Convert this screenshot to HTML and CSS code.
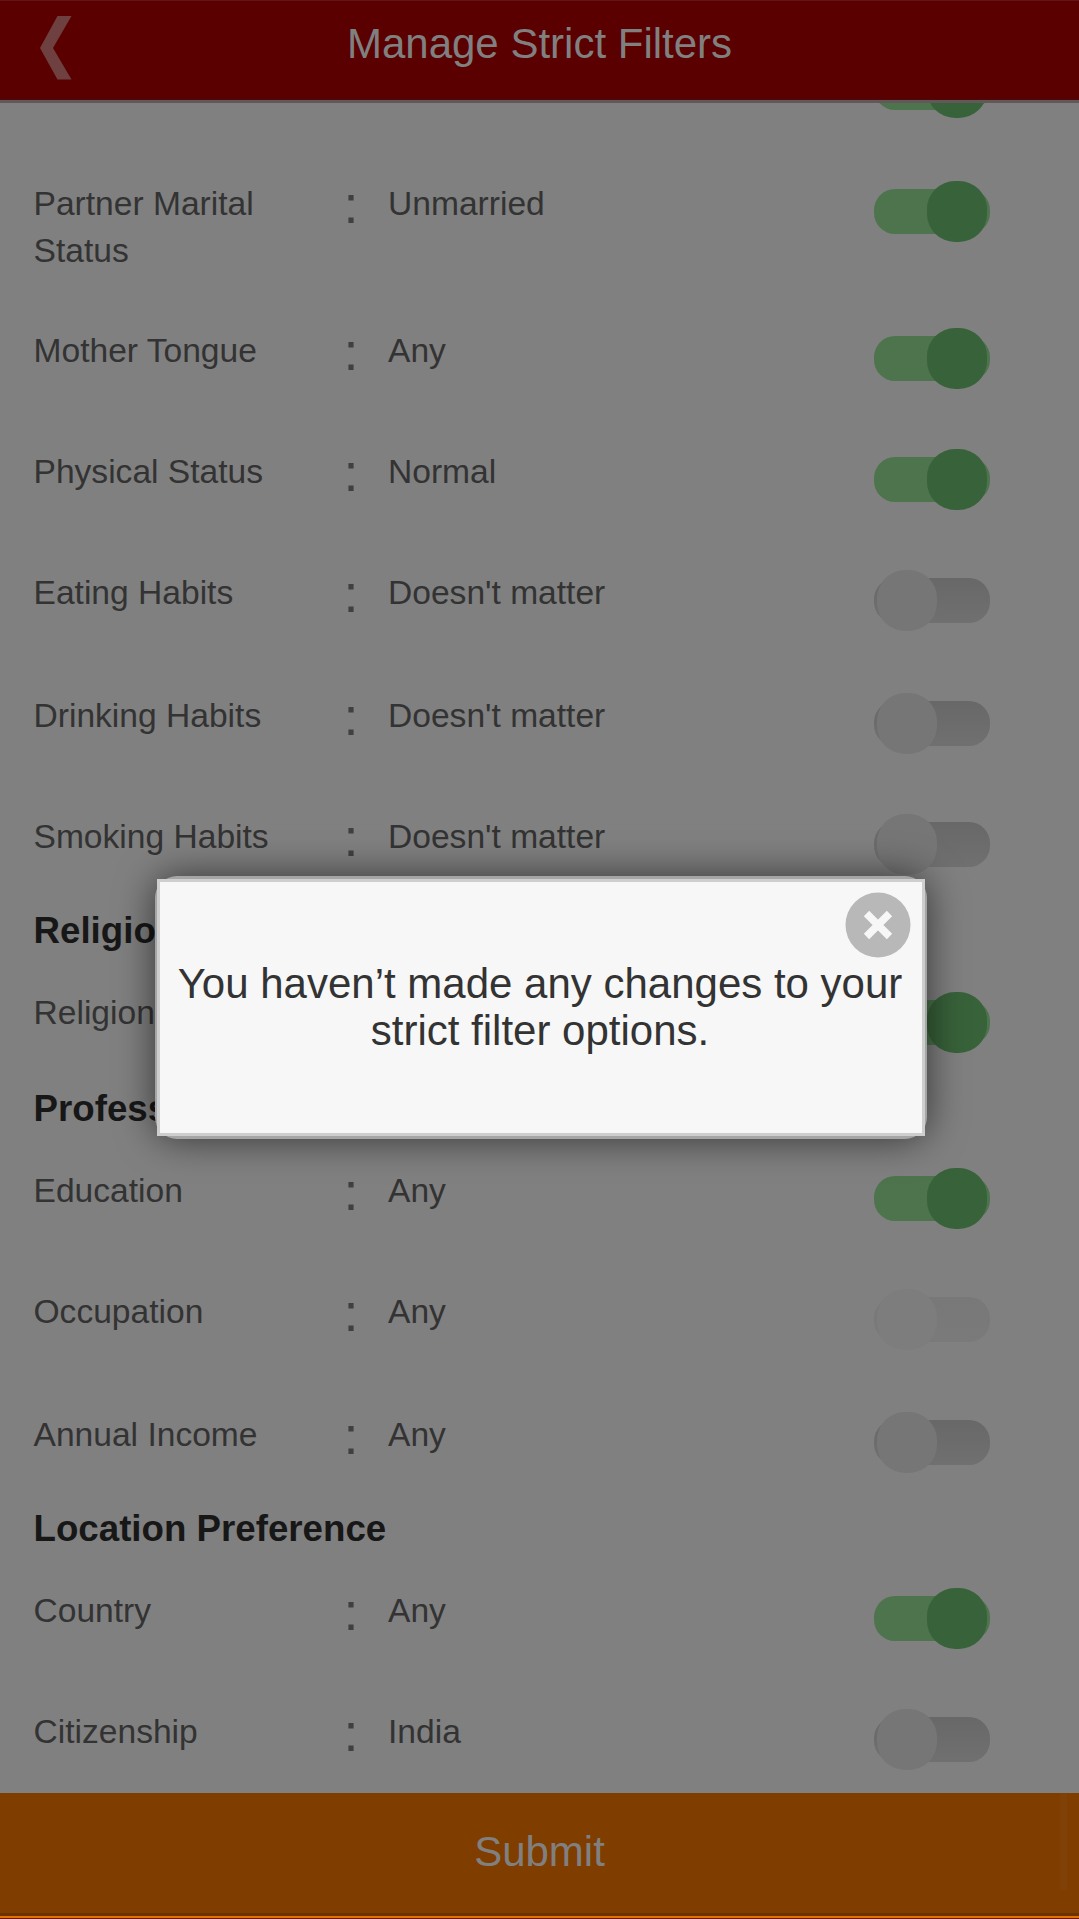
FILE: index.html
```html
<!DOCTYPE html>
<html lang="en">
<head>
<meta charset="utf-8">
<title>Manage Strict Filters</title>
<link rel="stylesheet" href="styles.css">
</head>
<body>
<div class="screen">
  <header class="topbar">
    <svg class="back" viewBox="0 0 32 64" width="32" height="64"><path d="M17.5 0H31.5L13 32L31.5 63.5H17.5L0 32Z" fill="#6f4040"/></svg>
    <h1 class="title">Manage Strict Filters</h1>
  </header>
  <main class="list">
    <div class="row row-cut"><span></span><span></span><span></span><i class="switch on"></i></div>
    <div class="row tall"><span>Partner Marital Status</span><b class="colon">:</b><span>Unmarried</span><i class="switch on"></i></div>
    <div class="row"><span>Mother Tongue</span><b class="colon">:</b><span>Any</span><i class="switch on"></i></div>
    <div class="row"><span>Physical Status</span><b class="colon">:</b><span>Normal</span><i class="switch on"></i></div>
    <div class="row wide"><span>Eating Habits</span><b class="colon">:</b><span>Doesn't matter</span><i class="switch"></i></div>
    <div class="row"><span>Drinking Habits</span><b class="colon">:</b><span>Doesn't matter</span><i class="switch"></i></div>
    <div class="row last"><span>Smoking Habits</span><b class="colon">:</b><span>Doesn't matter</span><i class="switch"></i></div>
    <h2 class="section first">Religious</h2>
    <div class="row last religion"><span>Religion</span><b></b><span></span><i class="switch on"></i></div>
    <h2 class="section">Professional</h2>
    <div class="row"><span>Education</span><b class="colon">:</b><span>Any</span><i class="switch on"></i></div>
    <div class="row wide"><span>Occupation</span><b class="colon">:</b><span>Any</span><i class="switch disabled"></i></div>
    <div class="row last"><span>Annual Income</span><b class="colon">:</b><span>Any</span><i class="switch"></i></div>
    <h2 class="section">Location Preference</h2>
    <div class="row"><span>Country</span><b class="colon">:</b><span>Any</span><i class="switch on"></i></div>
    <div class="row"><span>Citizenship</span><b class="colon">:</b><span>India</span><i class="switch"></i></div>
  </main>
  <footer class="submit">Submit<i class="scrollbar"></i></footer>
  <div class="dialog">
    <div class="dialog-body">
      <svg class="close" viewBox="0 0 66 66" width="66" height="66"><circle cx="33" cy="33" r="32.5" fill="#b8b8b8"/><path d="M21.5 21.5L44.5 44.5M44.5 21.5L21.5 44.5" stroke="#f7f7f7" stroke-width="7.5"/></svg>
      <p>You haven’t made any changes to your strict filter options.</p>
    </div>
  </div>
</div>
</body>
</html>
```

FILE: styles.css
```css
* { box-sizing: border-box; }
body {
  margin: 0;
  background: #808080;
  color: #333;
  font: 33.6px/47px "Liberation Sans", Arial, sans-serif;
}
.screen {
  position: relative;
  display: flex;
  flex-direction: column;
  width: 1079px;
  height: 1919px;
  overflow: hidden;
}
.topbar {
  flex: none;
  display: grid;
  grid-template-columns: 32px 1fr 32px;
  height: 103px;
  padding: 14.5px 39.5px 0;
  background: #5a0000;
  border-top: 1px solid #601616;
  border-bottom: 3px solid #625858;
  box-shadow: inset 0 -1px #480a0a;
}
.back { display: block; }
.title {
  margin: 3.5px 0 0;
  color: #808080;
  font-size: 42px;
  font-weight: 400;
  line-height: 50px;
  text-align: center;
}
.list {
  flex: 1;
  min-height: 0;
  overflow: hidden;
}
.row {
  display: grid;
  grid-template-columns: 290.5px 64px 486px 116px;
  height: 121px;
  padding-left: 33.5px;
}
.row-cut { height: 124px; margin-top: -47px; }
.tall { height: 147px; }
.wide { height: 123px; }
.last { height: 82px; }
.row > span:first-child { padding-right: 50px; }
.religion > span { margin-top: -2px; }
.colon {
  padding-left: 19.5px;
  color: #404040;
  font-size: 54px;
  font-weight: 400;
  line-height: 49px;
}
.section {
  margin: 0;
  height: 94px;
  padding: 12px 33.5px 0;
  color: #171717;
  font-size: 36.7px;
  line-height: 47px;
}
.section.first { height: 96px; }
.switch {
  position: relative;
  height: 45px;
  margin-top: 8.5px;
  border-radius: 21px;
  background: linear-gradient(#686868, #707070);
}
.switch::after {
  content: "";
  position: absolute;
  top: -8px;
  left: 3px;
  width: 60px;
  height: 61px;
  border-radius: 28px;
  background: #767676;
}
.switch.on { background: #4d744c; }
.switch.on::after { left: 53px; background: #386239; }
.switch.disabled { background: linear-gradient(#787878, #7a7a7a); }
.switch.disabled::after { background: #7d7d7d; }
.submit {
  position: relative;
  flex: none;
  height: 126px;
  padding-top: 35px;
  background: linear-gradient(#803d00 120px, #6b3200 120px, #6b3200 123px, #e27200 123px, #e27200 125px, #6b1515 125px);
  color: #808080;
  font-size: 42px;
  line-height: 48px;
  text-align: center;
}
.scrollbar {
  position: absolute;
  top: 0;
  right: 12px;
  width: 7px;
  height: 97px;
  background: #804108;
}
.dialog {
  position: absolute;
  left: 155px;
  top: 876px;
  width: 772px;
  height: 263px;
  padding: 3px 2px;
  border-radius: 22px;
  background: #a5a5a5;
  box-shadow: 0 0 38px rgba(0, 0, 0, .6);
}
.dialog-body {
  position: relative;
  height: 257px;
  padding: 78px 16px 0 14px;
  border: 3px solid #cecece;
  background: #f7f7f7;
  font-size: 42px;
  text-align: center;
}
.dialog-body p { margin: 0; }
.close {
  position: absolute;
  top: 10px;
  right: 11px;
}
```
